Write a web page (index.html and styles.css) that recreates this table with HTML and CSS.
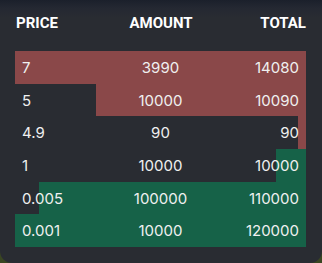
FILE: index.html
```html
<!DOCTYPE html>
<html>
<head>
<meta charset="utf-8">
<link rel="stylesheet" href="styles.css">
</head>
<body>
<div class="panel">
  <div class="head">
    <span class="c-left">PRICE</span>
    <span class="c-mid">AMOUNT</span>
    <span class="c-right">TOTAL</span>
  </div>
  <div class="book">
    <div class="row ask" style="--w:100%"><span class="c-left">7</span><span class="c-mid">3990</span><span class="c-right">14080</span></div>
    <div class="row ask" style="--w:72.2%"><span class="c-left">5</span><span class="c-mid">10000</span><span class="c-right">10090</span></div>
    <div class="row ask" style="--w:2.8%"><span class="c-left">4.9</span><span class="c-mid">90</span><span class="c-right">90</span></div>
    <div class="row bid" style="--w:10.3%"><span class="c-left">1</span><span class="c-mid">10000</span><span class="c-right">10000</span></div>
    <div class="row bid" style="--w:91.8%"><span class="c-left">0.005</span><span class="c-mid">100000</span><span class="c-right">110000</span></div>
    <div class="row bid" style="--w:100%"><span class="c-left">0.001</span><span class="c-mid">10000</span><span class="c-right">120000</span></div>
  </div>
</div>
</body>
</html>
```
FILE: styles.css
```css
html, body {
  margin: 0;
  padding: 0;
}
body {
  background: #3a4622;
  width: 322px;
  height: 263px;
  overflow: hidden;
}
.panel {
  box-sizing: border-box;
  height: 263px;
  padding: 15px 16px 0 15px;
  border-radius: 0 0 12px 12px;
  background: linear-gradient(180deg, #1b202b 0px, #242832 8px, #292c32 18px, #292c32 100%);
  color: #f2f2f2;
}
.head {
  display: grid;
  grid-template-columns: 1fr 1fr 1fr;
  font-family: Roboto, "Liberation Sans", sans-serif;
  font-weight: 700;
  font-size: 15px;
  line-height: 16px;
  padding: 0 0 0 1px;
  margin-bottom: 20px;
  color: #ffffff;
}
.book {
  display: flex;
  flex-direction: column;
}
.row {
  display: grid;
  grid-template-columns: 1fr 1fr 1fr;
  align-items: center;
  height: 32.7px;
  padding: 0 7px;
  font-family: Inter, "Noto Sans", sans-serif;
  font-size: 15px;
  font-weight: 400;
  color: #f0f0f0;
}
.ask {
  background: linear-gradient(to left, #8a4849 var(--w), transparent var(--w));
}
.bid {
  background: linear-gradient(to left, #166248 var(--w), transparent var(--w));
}
.c-left { text-align: left; }
.c-mid { text-align: center; }
.c-right { text-align: right; }
```
